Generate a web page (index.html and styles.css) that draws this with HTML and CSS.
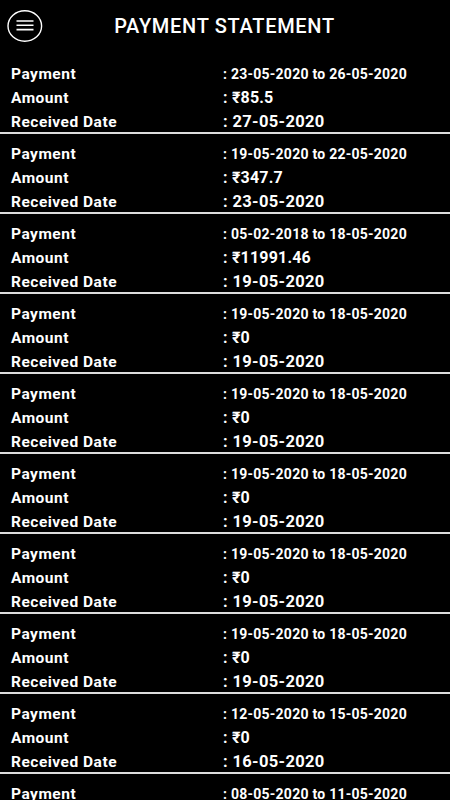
FILE: index.html
```html
<!DOCTYPE html>
<html lang="en">
<head>
    <meta charset="UTF-8">
    <meta name="viewport" content="width=device-width, initial-scale=1.0">
    <title>Payment Statement</title>
    <link rel="stylesheet" href="styles.css">
</head>
<body>
    <header>
        <button type="button" class="menuButton" aria-label="Menu">
            <svg width="36" height="33" viewBox="0 0 36 33">
                <ellipse cx="17.8" cy="16" rx="16.8" ry="15.2" fill="none" stroke="#fff" stroke-width="1.4"/>
                <path d="M9.5 11h17M9.5 15.3h17M9.5 19.6h17" stroke="#fff" stroke-width="1.6"/>
            </svg>
        </button>
        <h1>PAYMENT STATEMENT</h1>
    </header>
    <main id="statementList"></main>

    <script>
    let payments = [
        ["23-05-2020 to 26-05-2020", "85.5", "27-05-2020"],
        ["19-05-2020 to 22-05-2020", "347.7", "23-05-2020"],
        ["05-02-2018 to 18-05-2020", "11991.46", "19-05-2020"],
        ["19-05-2020 to 18-05-2020", "0", "19-05-2020"],
        ["19-05-2020 to 18-05-2020", "0", "19-05-2020"],
        ["19-05-2020 to 18-05-2020", "0", "19-05-2020"],
        ["19-05-2020 to 18-05-2020", "0", "19-05-2020"],
        ["19-05-2020 to 18-05-2020", "0", "19-05-2020"],
        ["12-05-2020 to 15-05-2020", "0", "16-05-2020"],
        ["08-05-2020 to 11-05-2020", "0", "12-05-2020"]
    ];

    function generateStatement() {
        const list = document.getElementById('statementList');
        payments.forEach((p) => {
            const card = document.createElement('section');
            card.className = 'statement';
            card.innerHTML = `
                <span class="label">Payment</span>
                <span class="value period">: ${p[0]}</span>
                <span class="label">Amount</span>
                <span class="value amount">: &#8377;${p[1]}</span>
                <span class="label">Received Date</span>
                <span class="value received">: ${p[2]}</span>
            `;
            list.appendChild(card);
        });
    }

    generateStatement();
    </script>
</body>
</html>
```

FILE: styles.css
```css
body {
    font-family: Roboto, "Noto Sans", sans-serif;
    background-color: #000;
    color: #fff;
    margin: 0;
    padding: 0;
    overflow: hidden;
}

header {
    display: grid;
    grid-template-columns: 1fr auto 1fr;
    align-items: center;
    height: 52px;
}

.menuButton {
    justify-self: start;
    background: none;
    border: none;
    padding: 0;
    margin: 1px 0 0 7px;
    width: 36px;
    height: 33px;
    cursor: pointer;
}

.menuButton svg {
    display: block;
}

h1 {
    margin: 0 0 0 -1px;
    font-size: 20px;
    font-weight: 500;
    letter-spacing: 0.7px;
}

main {
    padding-top: 2px;
}

.statement {
    display: grid;
    grid-template-columns: 212px auto;
    row-gap: 4px;
    padding: 10px 0 0 11px;
    height: 80px;
    box-sizing: border-box;
    border-bottom: 2px solid #dcdcdc;
}

.label, .value {
    font-weight: 700;
    line-height: 20px;
    white-space: nowrap;
}

.label {
    font-size: 15.5px;
    letter-spacing: 0.5px;
}

.value.period {
    font-size: 14px;
    letter-spacing: 0.25px;
}

.value.amount {
    font-size: 16px;
    letter-spacing: 0.2px;
}

.value.received {
    font-size: 16.5px;
    letter-spacing: 0.35px;
}
```
